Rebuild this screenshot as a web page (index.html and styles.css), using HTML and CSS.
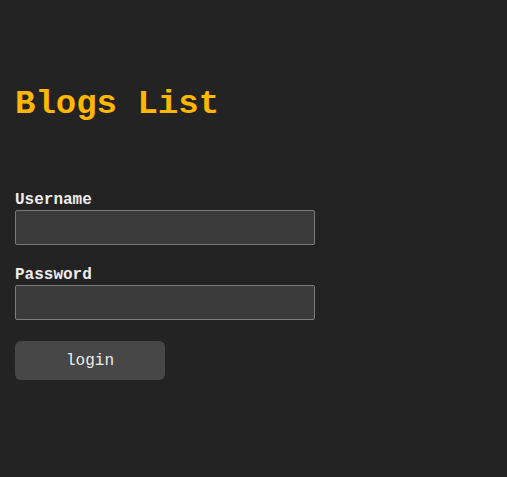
FILE: index.html
```html
<!DOCTYPE html>
<html>
<head>
<meta charset="utf-8">
<link rel="stylesheet" href="styles.css">
</head>
<body>
<main class="page">
  <h1 class="title">Blogs List</h1>
  <form class="login-form">
    <div class="field">
      <label class="label" for="username">Username</label>
      <input class="input" id="username" type="text">
    </div>
    <div class="field">
      <label class="label" for="password">Password</label>
      <input class="input" id="password" type="password">
    </div>
    <button class="button" type="button">login</button>
  </form>
</main>
</body>
</html>
```
FILE: styles.css
```css
html, body {
  margin: 0;
  padding: 0;
  background: #232323;
  height: 100%;
}
.page {
  padding: 84px 15px 0 15px;
  font-family: "Liberation Mono", "Courier New", monospace;
}
.title {
  margin: 0;
  font-size: 34px;
  line-height: 40px;
  font-weight: bold;
  color: #ffb700;
}
.login-form {
  margin-top: 66px;
  display: flex;
  flex-direction: column;
  align-items: flex-start;
}
.field {
  display: flex;
  flex-direction: column;
  margin-bottom: 20px;
}
.label {
  font-size: 16px;
  font-weight: bold;
  line-height: 20px;
  color: #eeeeee;
}
.input {
  box-sizing: border-box;
  width: 300px;
  height: 35px;
  margin: 0;
  background: #3b3b3b;
  border: 1px solid #7a7a7a;
  border-radius: 2px;
  color: #eee;
}
.button {
  margin-top: 1px;
  width: 150px;
  height: 39px;
  border: none;
  border-radius: 6px;
  background: #474747;
  color: #eeeeee;
  font-family: "Liberation Mono", "Courier New", monospace;
  font-size: 16px;
}
```
